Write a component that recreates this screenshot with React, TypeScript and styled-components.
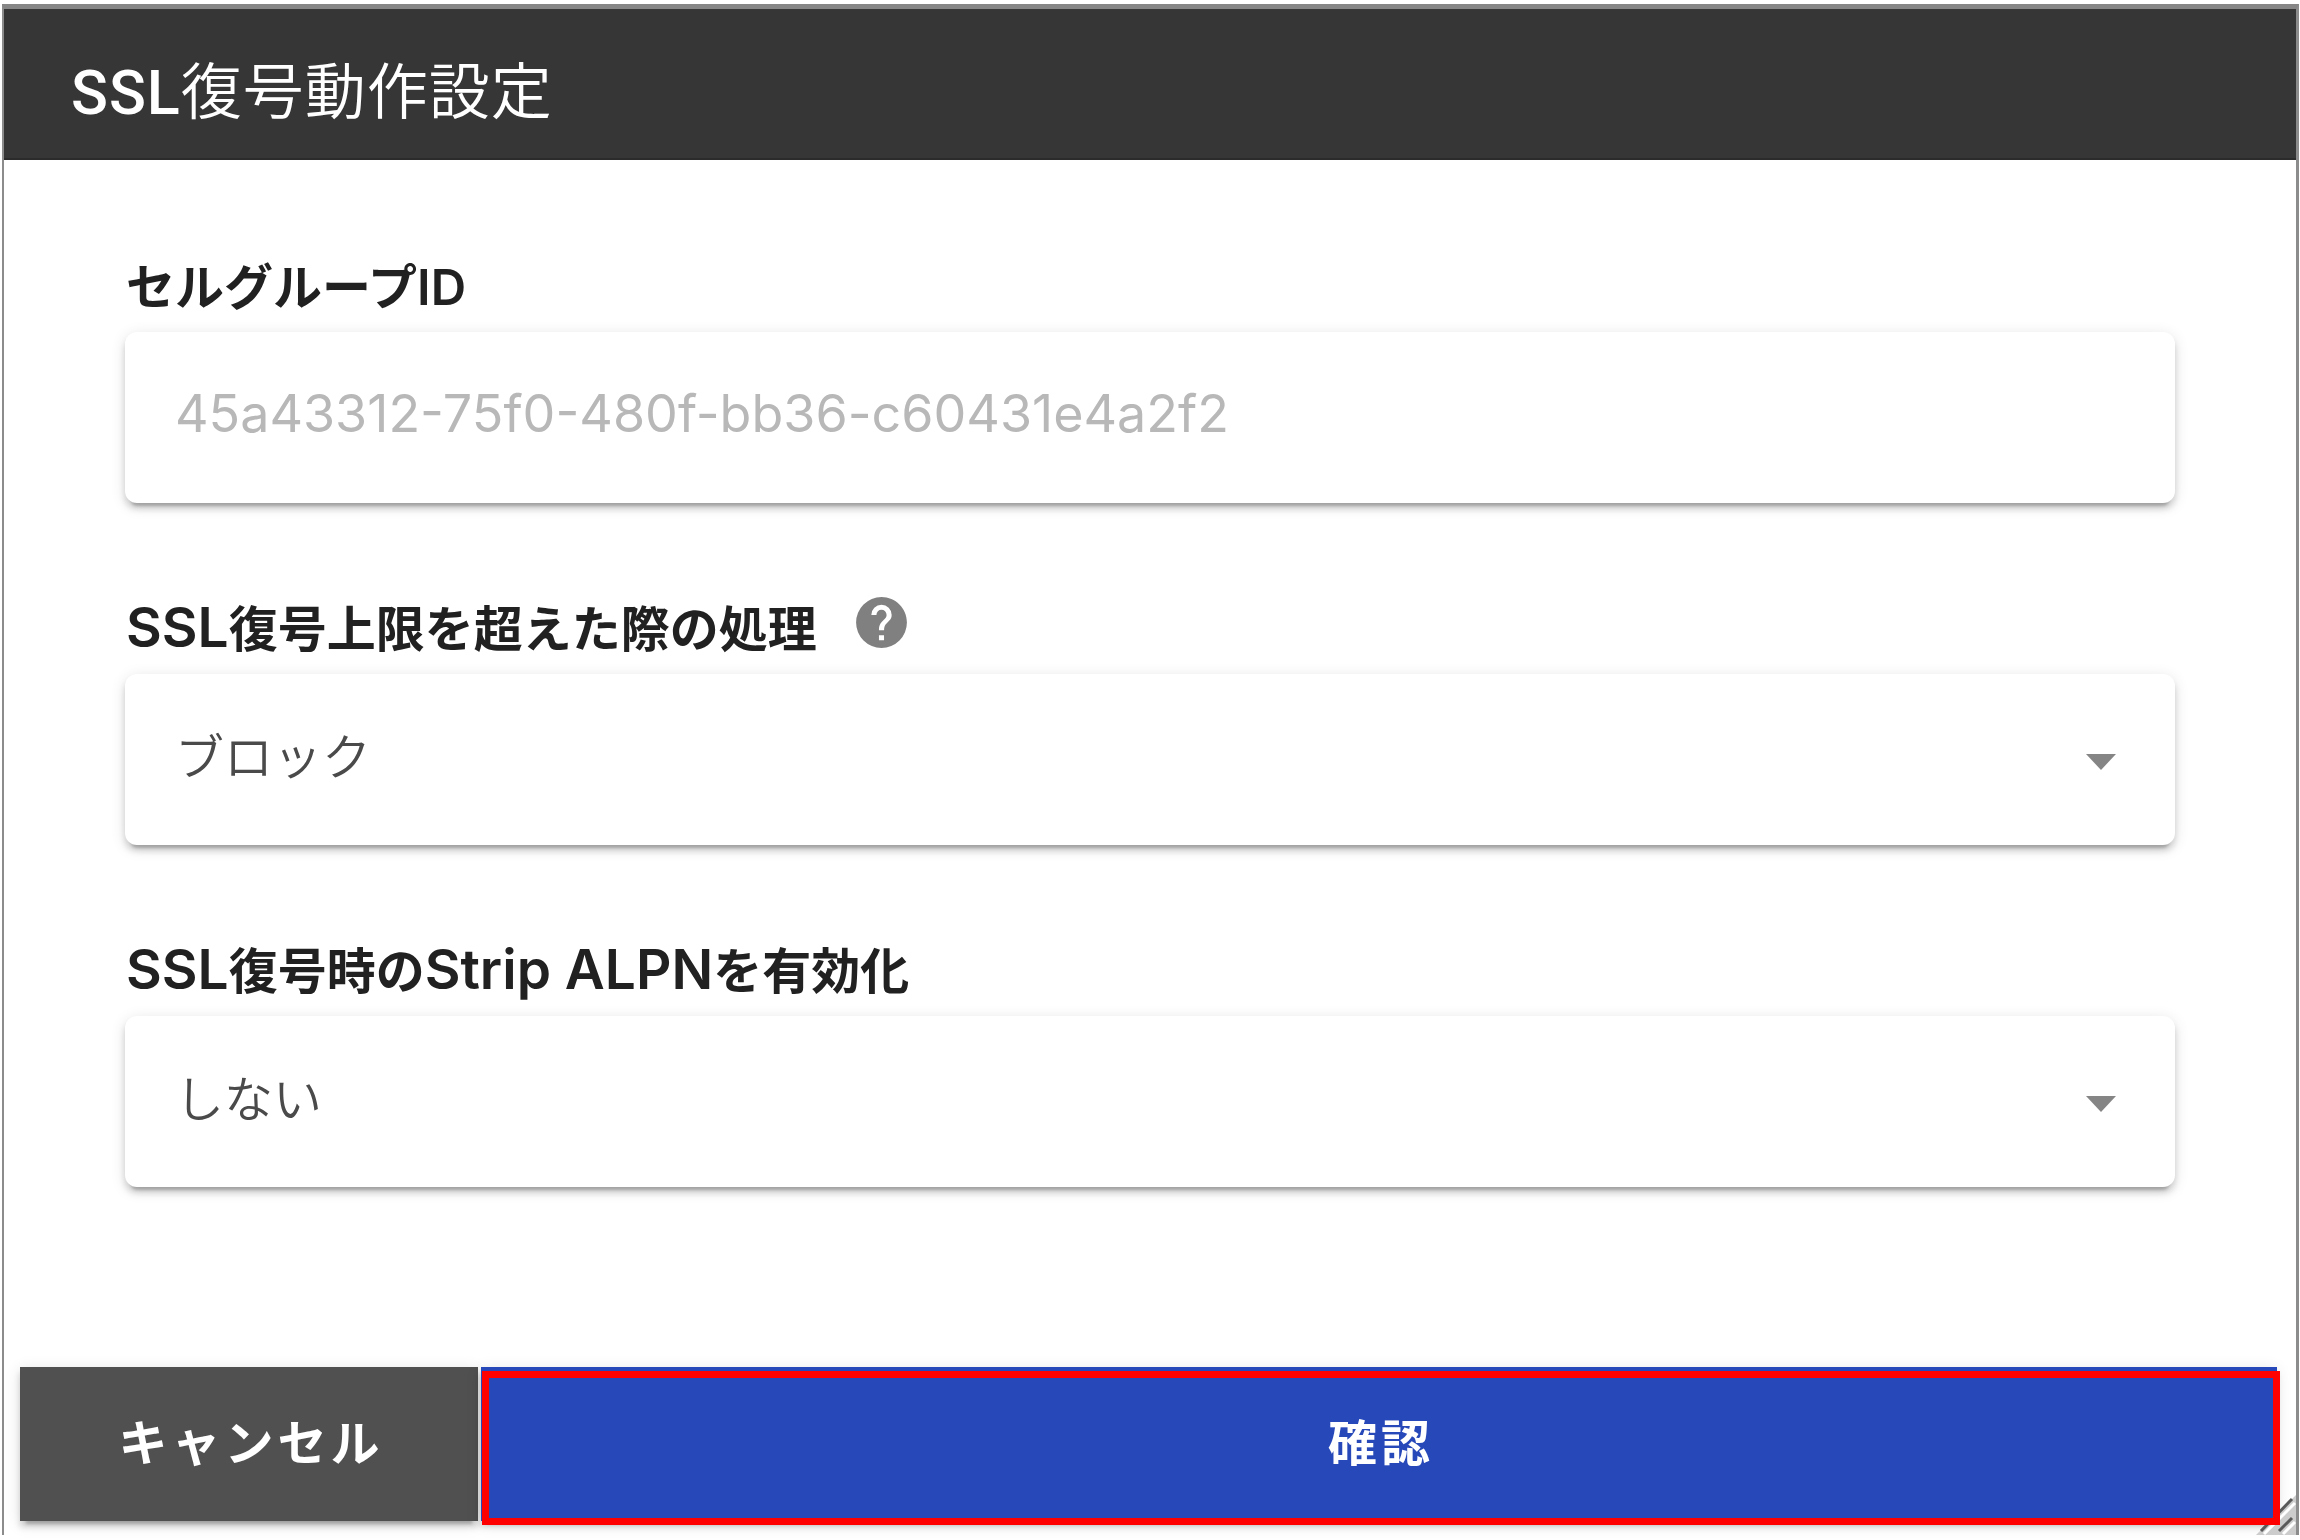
import React from "react";
import styled, { createGlobalStyle } from "styled-components";

const GlobalStyle = createGlobalStyle`
  *, *::before, *::after { box-sizing: border-box; }
  body {
    margin: 0;
    background: #ffffff;
    font-family: Inter, "Noto Sans CJK JP", sans-serif;
    color: #212121;
  }
`;

const Page = styled.div`
  display: flex;
  min-height: 100vh;
  padding: 4px 1px 5px 2px;
`;

const Dialog = styled.form`
  position: relative;
  flex: 1;
  display: flex;
  flex-direction: column;
  border: 2px solid #8c8c8c;
  border-top: 5px solid #868686;
  border-right-width: 3px;
  border-bottom: 0;
  background: #ffffff;
`;

const TitleBar = styled.header`
  display: flex;
  align-items: center;
  padding: 39px 67px 20px;
  background: #363636;
  border-bottom: 2px solid #2b2b2b;
`;

const Title = styled.h1`
  margin: 0;
  font-family: Roboto, "Noto Sans CJK JP", sans-serif;
  font-size: 61px;
  line-height: 90px;
  font-weight: 500;
  letter-spacing: 1px;
  color: #ffffff;
`;

const TitleText = styled.span`
  font-weight: 350;
`;

const Fields = styled.div`
  flex: 1;
  display: flex;
  flex-direction: column;
  gap: 89px;
  padding: 90px 121px;
`;

const Field = styled.div`
  display: flex;
  flex-direction: column;
`;

const LabelRow = styled.div`
  display: flex;
  align-items: flex-start;
  gap: 34px;
  height: 82px;
  padding-left: 1px;
`;

const Label = styled.label`
  font-size: 49px;
  line-height: 76px;
  font-weight: 600;
`;

const Latin = styled.span`
  font-size: 55px;
  line-height: 1;
`;

const HelpButton = styled.button`
  display: flex;
  padding: 0;
  border: 0;
  background: none;
  color: #808080;
`;

const ControlBox = styled.div`
  position: relative;
  display: flex;
  border-radius: 12px;
  background: #ffffff;
  box-shadow:
    0 9px 3px -6px rgba(0, 0, 0, 0.2),
    0 6px 6px 0 rgba(0, 0, 0, 0.14),
    0 3px 15px 0 rgba(0, 0, 0, 0.12);
`;

const controlText = `
  flex: 1;
  width: 100%;
  height: 171px;
  margin: 0;
  padding: 0 50px 4px;
  border: 0;
  background: none;
  font-family: inherit;
  font-size: 49px;
  line-height: 64px;
`;

const TextInput = styled.input`
  ${controlText}
  padding-bottom: 8px;
  font-size: 52px;
  font-weight: 400;
  color: #b8b8b8;
`;

const Select = styled.select`
  ${controlText}
  appearance: none;
  font-weight: 350;
  color: #4a4a4a;
`;

const Arrow = styled.svg`
  position: absolute;
  right: 58px;
  top: 80px;
  pointer-events: none;
`;

const Actions = styled.footer`
  display: flex;
  gap: 3px;
  padding: 0 19px 14px 16px;
`;

const ActionButton = styled.button<{ $primary?: boolean }>`
  position: relative;
  flex: ${(p) => (p.$primary ? "1" : "0 0 458px")};
  height: 154px;
  padding: 0 0 0 4px;
  border: 0;
  background: ${(p) => (p.$primary ? "#2748b9" : "#505050")};
  box-shadow:
    0 9px 3px -6px rgba(0, 0, 0, 0.2),
    0 6px 6px 0 rgba(0, 0, 0, 0.14),
    0 3px 15px 0 rgba(0, 0, 0, 0.12);
  font-family: inherit;
  font-size: 49px;
  line-height: 64px;
  font-weight: 600;
  letter-spacing: 4px;
  color: #ffffff;
`;

const Highlight = styled.span`
  position: absolute;
  z-index: 1;
  inset: 4px -3px -4px 1px;
  border: 7px solid #ff0000;
`;

const ResizeGrip = styled.svg`
  position: absolute;
  right: 0;
  bottom: 0;
`;

function HelpIcon() {
  return (
    <svg width="61" height="61" viewBox="0 0 24 24" fill="currentColor" aria-hidden="true">
      <path d="M15.07 11.25l-.9.92C13.45 12.89 13 13.5 13 15h-2v-.5c0-1.11.45-2.11 1.17-2.83l1.24-1.26c.37-.36.59-.86.59-1.41a2 2 0 0 0-2-2 2 2 0 0 0-2 2H8a4 4 0 0 1 4-4 4 4 0 0 1 4 4c0 .88-.36 1.67-.93 2.25M13 19h-2v-2h2M12 2A10 10 0 0 0 2 12a10 10 0 0 0 10 10 10 10 0 0 0 10-10c0-5.53-4.5-10-10-10z" />
    </svg>
  );
}

interface SelectFieldProps {
  id: string;
  label: React.ReactNode;
  options: string[];
  help?: boolean;
}

function SelectField({ id, label, options, help }: SelectFieldProps) {
  return (
    <Field>
      <LabelRow>
        <Label htmlFor={id}>{label}</Label>
        {help && (
          <HelpButton type="button" aria-label="ヘルプ">
            <HelpIcon />
          </HelpButton>
        )}
      </LabelRow>
      <ControlBox>
        <Select id={id} defaultValue={options[0]}>
          {options.map((option) => (
            <option key={option}>{option}</option>
          ))}
        </Select>
        <Arrow width="32" height="16" viewBox="0 0 32 16" aria-hidden="true">
          <path d="M1 0H31L16 16Z" fill="#858585" />
        </Arrow>
      </ControlBox>
    </Field>
  );
}

export default function App() {
  return (
    <Page>
      <GlobalStyle />
      <Dialog onSubmit={(e) => e.preventDefault()}>
        <TitleBar>
          <Title>
            SSL<TitleText>復号動作設定</TitleText>
          </Title>
        </TitleBar>
        <Fields>
          <Field>
            <LabelRow>
              <Label htmlFor="cell-group">セルグループID</Label>
            </LabelRow>
            <ControlBox>
              <TextInput
                id="cell-group"
                type="text"
                disabled
                defaultValue="45a43312-75f0-480f-bb36-c60431e4a2f2"
              />
            </ControlBox>
          </Field>
          <SelectField
            id="over-limit"
            label={<><Latin>SSL</Latin>復号上限を超えた際の処理</>}
            options={["ブロック"]}
            help
          />
          <SelectField
            id="strip-alpn"
            label={<><Latin>SSL</Latin>復号時の<Latin>Strip ALPN</Latin>を有効化</>}
            options={["しない"]}
          />
        </Fields>
        <Actions>
          <ActionButton type="button">キャンセル</ActionButton>
          <ActionButton type="submit" $primary>
            確認
            <Highlight />
          </ActionButton>
        </Actions>
        <ResizeGrip width="40" height="40" viewBox="0 0 40 40" aria-hidden="true">
          <path d="M40 0V40H0Z" fill="#cccccc" />
          <path d="M8 39L39 8M27 39L39 27" stroke="#ffffff" strokeWidth="3" />
          <path d="M5 36L36 4M23 36L36 23" stroke="#5a5a5a" strokeWidth="3" />
        </ResizeGrip>
      </Dialog>
    </Page>
  );
}
